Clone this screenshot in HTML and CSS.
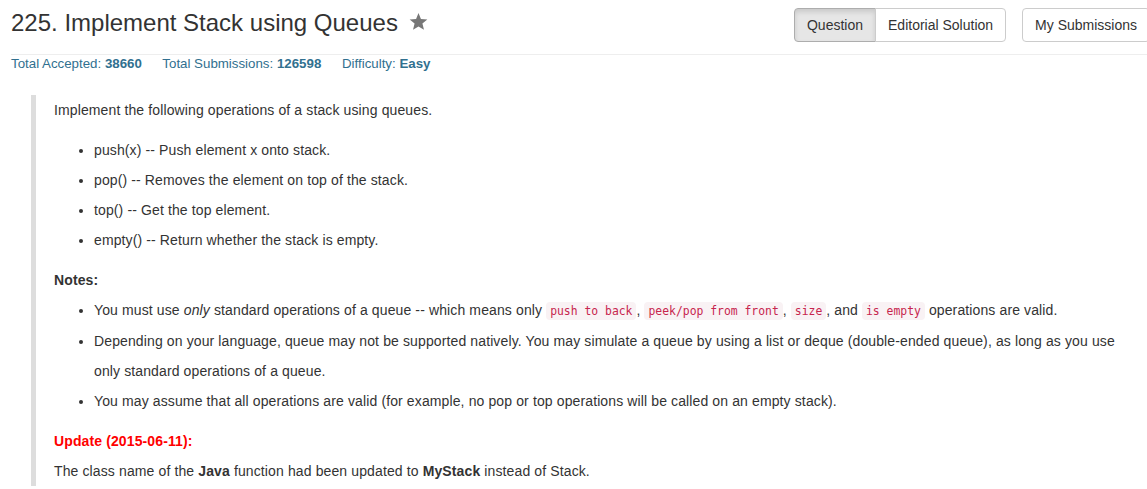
FILE: index.html
```html
<!DOCTYPE html>
<html lang="en">
<head>
  <meta charset="UTF-8" />
  <title>225. Implement Stack using Queues</title>
  <link rel="stylesheet" href="styles.css">
</head>
<body>
  <div class="container">
    <div class="question-title">
      <h3>225. Implement Stack using Queues
        <svg class="star" width="19" height="18" viewBox="0 0 24 23"><path d="M12 0l3.1 7.6 8.2.6-6.3 5.3 2 8-7-4.4-7 4.4 2-8L.7 8.2l8.2-.6z" fill="#777"/></svg>
      </h3>
      <div class="actions">
        <div class="btn-group">
          <a class="btn active">Question</a>
          <a class="btn">Editorial Solution</a>
        </div>
        <a class="btn single">My Submissions</a>
      </div>
    </div>

    <div class="meta text-info">
      <span>Total Accepted: <strong>38660</strong></span>
      <span>Total Submissions: <strong>126598</strong></span>
      <span>Difficulty: <strong>Easy</strong></span>
    </div>

    <div class="question-content">
      <p>Implement the following operations of a stack using queues.</p>
      <ul>
        <li>push(x) -- Push element x onto stack.</li>
        <li>pop() -- Removes the element on top of the stack.</li>
        <li>top() -- Get the top element.</li>
        <li>empty() -- Return whether the stack is empty.</li>
      </ul>
      <p class="notes"><b>Notes:</b></p>
      <ul>
        <li>You must use <i>only</i> standard operations of a queue -- which means only <code>push to back</code>, <code>peek/pop from front</code>, <code>size</code>, and <code>is empty</code> operations are valid.</li>
        <li>Depending on your language, queue may not be supported natively. You may simulate a queue by using a list or deque (double-ended queue), as long as you use only standard operations of a queue.</li>
        <li>You may assume that all operations are valid (for example, no pop or top operations will be called on an empty stack).</li>
      </ul>
      <p><b class="update">Update (2015-06-11):</b><br>
        The class name of the <b>Java</b> function had been updated to <b>MyStack</b> instead of Stack.</p>
    </div>
  </div>
</body>
</html>
```

FILE: styles.css
```css
html, body { overflow: hidden; }
body { margin: 0; font-family: "Liberation Sans", Arial, sans-serif; font-size: 14px; color: #333; background: #fff; }
.container { width: 1139px; padding-left: 11px; }

.question-title { display: flex; justify-content: space-between; align-items: flex-start; padding-top: 8px; height: 46px; border-bottom: 1px solid #eee; }
.question-title h3 { margin: 2px 0 0; font-size: 24px; font-weight: normal; line-height: 26px; display: flex; align-items: center; gap: 11px; }
.star { margin-top: -2px; }

.actions { display: flex; gap: 16px; }
.btn-group { display: flex; }
.btn { display: inline-block; padding: 6px 12px; line-height: 20px; font-size: 14px; color: #333; background: #fff; border: 1px solid #ccc; border-radius: 4px; }
.btn-group .btn:first-child { border-radius: 4px 0 0 4px; }
.btn-group .btn + .btn { margin-left: -1px; border-radius: 0 4px 4px 0; }
.btn.active { background: #e6e6e6; border-color: #adadad; box-shadow: inset 0 3px 5px rgba(0,0,0,.125); }

.meta { font-size: 13.3px; padding-top: 1px; line-height: 16px; }
.meta span { margin-right: 17px; }
.text-info { color: #31708f; }

.question-content { margin: 23px 14px 0 20px; border-left: 5px solid #ddd; padding-left: 18px; line-height: 30px; letter-spacing: 0.12px; }
.question-content p { margin: 0 0 10px; }
.question-content p.notes { margin: 0; }
.question-content ul { margin: 0 0 10px; padding-left: 40px; }
.update { color: red; }
code { font-family: "DejaVu Sans Mono", monospace; font-size: 11.4px; letter-spacing: 0; padding: 2px 4px; color: #c7254e; background: #f9f2f4; border-radius: 4px; }
```
